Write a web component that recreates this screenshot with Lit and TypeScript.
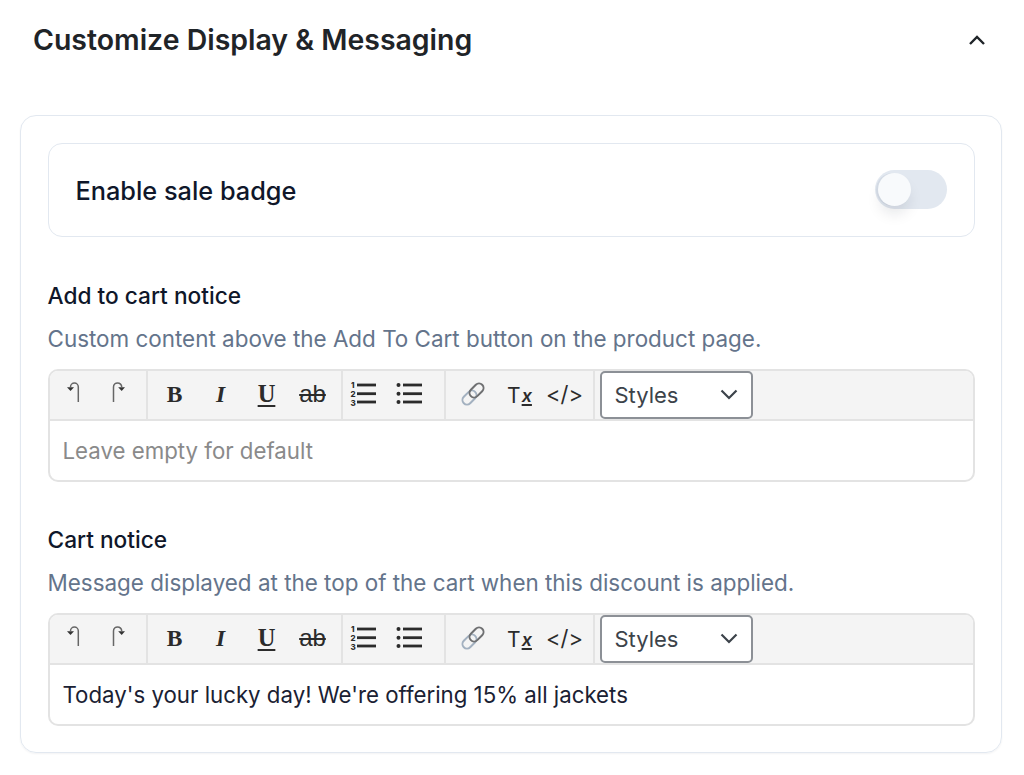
import { LitElement, html, css } from "lit";
import { customElement, property } from "lit/decorators.js";

@customElement("rich-editor")
class RichEditor extends LitElement {
	@property() placeholder = "";
	@property() value = "";

	static override styles = css`
		:host {
			display: block;
			border: 2px solid #e3e3e3;
			border-radius: 10px;
			overflow: hidden;
			background: #fff;
			font-family: Inter, sans-serif;
		}
		.toolbar {
			display: flex;
			height: 49px;
			background: #f4f4f4;
			border-bottom: 2px solid #e3e3e3;
			margin-top: -1px;
		}
		.group {
			display: flex;
			align-items: center;
			border-right: 2px solid #e3e3e3;
			box-sizing: border-box;
			height: 100%;
		}
		.history {
			width: 98px;
		}
		.format {
			width: 195px;
			padding-left: 4px;
		}
		.lists {
			width: 103px;
		}
		.lists .btn:first-child {
			margin-left: -3px;
		}
		.misc {
			width: 149px;
			padding-left: 4px;
		}
		.btn {
			display: flex;
			align-items: center;
			justify-content: center;
			width: 46px;
			height: 100%;
			color: #2b2b2b;
			flex: none;
		}
		.serif {
			font-family: "Liberation Serif", serif;
			font-size: 23.5px;
			font-weight: 700;
			color: #2b2b2b;
		}
		.ital {
			font-style: italic;
		}
		.under {
			font-size: 24.5px;
			text-decoration: underline;
			text-underline-offset: 3px;
			text-decoration-thickness: 2px;
		}
		.strike {
			font-family: "Liberation Sans", sans-serif;
			font-size: 24px;
			font-weight: 400;
			text-decoration: line-through;
			text-decoration-thickness: 2px;
		}
		.clear {
			font-size: 21px;
			font-weight: 400;
			padding: 3px 0 0 2px;
			box-sizing: border-box;
		}
		.clear sub {
			font-style: italic;
			font-weight: 600;
			font-size: 18px;
			line-height: 0;
			margin-left: 1px;
			text-decoration: underline;
			text-decoration-thickness: 2px;
			text-underline-offset: 2px;
		}
		.code {
			font-size: 22px;
			white-space: nowrap;
		}
		.select {
			display: flex;
			align-items: center;
			justify-content: space-between;
			box-sizing: border-box;
			width: 153px;
			height: 48px;
			margin: 1px 0 0 5px;
			padding: 0 13px 0 13px;
			background: #fff;
			border: 2px solid #8c9096;
			border-radius: 5px;
			font-size: 22px;
			color: #3c434a;
		}
		.body {
			display: flex;
			align-items: center;
			height: 59px;
			padding: 0 13px;
			font-size: 22.25px;
			color: #1a2133;
		}
		.body.empty {
			color: #8a8a8a;
		}
		.num {
			font-family: Inter, sans-serif;
			font-size: 8px;
			font-weight: 800;
		}
	`;

	override render() {
		return html`<div class="toolbar">
				<div class="group history">
					<span class="btn">
						<svg width="18" height="24" viewBox="0 0 18 24" fill="none" stroke="#666" stroke-width="1.5">
							<path d="M14.3 20V5a3.9 3.9 0 0 0-7.8 0" />
							<path d="M3 5.2h7L6.5 9z" fill="#333" stroke="none" />
						</svg>
					</span>
					<span class="btn">
						<svg width="18" height="24" viewBox="0 0 18 24" fill="none" stroke="#666" stroke-width="1.5">
							<path d="M3.5 20V5a4.1 4.1 0 0 1 8.2 0" />
							<path d="M8.2 5.2H15L11.7 9z" fill="#333" stroke="none" />
						</svg>
					</span>
				</div>
				<div class="group format">
					<span class="btn serif">B</span>
					<span class="btn serif ital">I</span>
					<span class="btn serif"><span class="under">U</span></span>
					<span class="btn serif"><span class="strike">ab</span></span>
				</div>
				<div class="group lists">
					<span class="btn">
						<svg width="28" height="32" viewBox="0 -4 28 32" fill="#2b2b2b">
							<rect x="8" y="1.6" width="19" height="2.8" />
							<rect x="8" y="10.3" width="19" height="2.8" />
							<rect x="8" y="18.6" width="19" height="2.8" />
							<text class="num" x="2" y="6">1</text>
							<text class="num" x="1.5" y="15">2</text>
							<text class="num" x="1.5" y="23.5">3</text>
						</svg>
					</span>
					<span class="btn">
						<svg width="28" height="24" viewBox="0 0 28 24" fill="#2b2b2b">
							<rect x="8" y="1.6" width="19" height="2.8" />
							<rect x="8" y="10.3" width="19" height="2.8" />
							<rect x="8" y="18.6" width="19" height="2.8" />
							<circle cx="3.5" cy="3" r="2" />
							<circle cx="3.5" cy="11.7" r="2" />
							<circle cx="3.5" cy="20" r="2" />
						</svg>
					</span>
				</div>
				<div class="group misc">
					<span class="btn">
						<svg width="24" height="24" viewBox="0 0 24 24" fill="none" stroke-width="2" style="overflow: visible">
							<g transform="rotate(-45 12 12)">
								<rect x="-1" y="7.5" width="16" height="9" rx="4.5" stroke="#a3b1c0" />
								<rect x="9" y="7.5" width="16" height="9" rx="4.5" stroke="#6f7072" />
							</g>
						</svg>
					</span>
					<span class="btn clear">T<sub>x</sub></span>
					<span class="btn code">&lt;/&gt;</span>
				</div>
				<div class="select">
					<span>Styles</span>
					<svg width="18" height="11" viewBox="0 0 18 11" fill="none" stroke="#3c434a" stroke-width="2.2">
						<path d="M1.5 1.5 9 9l7.5-7.5" />
					</svg>
				</div>
			</div>
			<div class="body ${this.value ? "" : "empty"}">${this.value || this.placeholder}</div>`;
	}
}

@customElement("app-root")
export class AppRoot extends LitElement {
	static override styles = css`
		:host {
			display: block;
			width: 1024px;
			height: 775px;
			overflow: hidden;
			background: #fff;
			font-family: Inter, sans-serif;
		}
		.header {
			display: flex;
			align-items: center;
			justify-content: space-between;
			height: 79px;
			padding: 0 38px 0 33px;
		}
		h2 {
			margin: 0;
			font-size: 28.45px;
			font-weight: 600;
			color: #1f2428;
		}
		.card {
			margin: 36px 22px 0 20px;
			padding: 26.5px;
			border: 1.5px solid #e2e8f0;
			border-radius: 16px;
			box-shadow: 0 1px 2px rgba(15, 23, 42, 0.05);
		}
		.toggle-row {
			display: flex;
			align-items: center;
			justify-content: space-between;
			height: 94px;
			box-sizing: border-box;
			padding: 0 27px 0 27px;
			border: 1.5px solid #e2e8f0;
			border-radius: 14px;
			font-size: 25.3px;
			font-weight: 500;
			color: #0f172a;
		}
		.toggle-row span {
			padding-top: 2px;
		}
		.switch {
			width: 72px;
			height: 39px;
			border-radius: 20px;
			background: #e2e8f0;
			position: relative;
		}
		.knob {
			position: absolute;
			left: 3px;
			top: 3px;
			width: 33px;
			height: 33px;
			border-radius: 50%;
			background: #f8fafc;
			box-shadow: 0 10px 15px -3px rgba(15, 23, 42, 0.12), -2px 0 0 #d5dce6;
		}
		.field {
			margin-top: 44px;
		}
		.field + .field {
			margin-top: 43px;
		}
		.label {
			font-size: 22.7px;
			font-weight: 500;
			line-height: 30px;
			color: #0f172a;
		}
		.hint {
			margin: 13.5px 0 14.5px;
			font-size: 22.43px;
			line-height: 30px;
			color: #64748b;
		}
	`;

	override render() {
		return html`<div class="header">
				<h2>Customize Display &amp; Messaging</h2>
				<svg width="18" height="12" viewBox="0 0 18 12" fill="none" stroke="#1f2428" stroke-width="2.4">
					<path d="M2 10 9 3l7 7" />
				</svg>
			</div>
			<div class="card">
				<div class="toggle-row">
					<span>Enable sale badge</span>
					<div class="switch"><div class="knob"></div></div>
				</div>
				<div class="field">
					<div class="label">Add to cart notice</div>
					<div class="hint">Custom content above the Add To Cart button on the product page.</div>
					<rich-editor placeholder="Leave empty for default"></rich-editor>
				</div>
				<div class="field">
					<div class="label">Cart notice</div>
					<div class="hint">Message displayed at the top of the cart when this discount is applied.</div>
					<rich-editor value="Today's your lucky day! We're offering 15% all jackets"></rich-editor>
				</div>
			</div>`;
	}
}
